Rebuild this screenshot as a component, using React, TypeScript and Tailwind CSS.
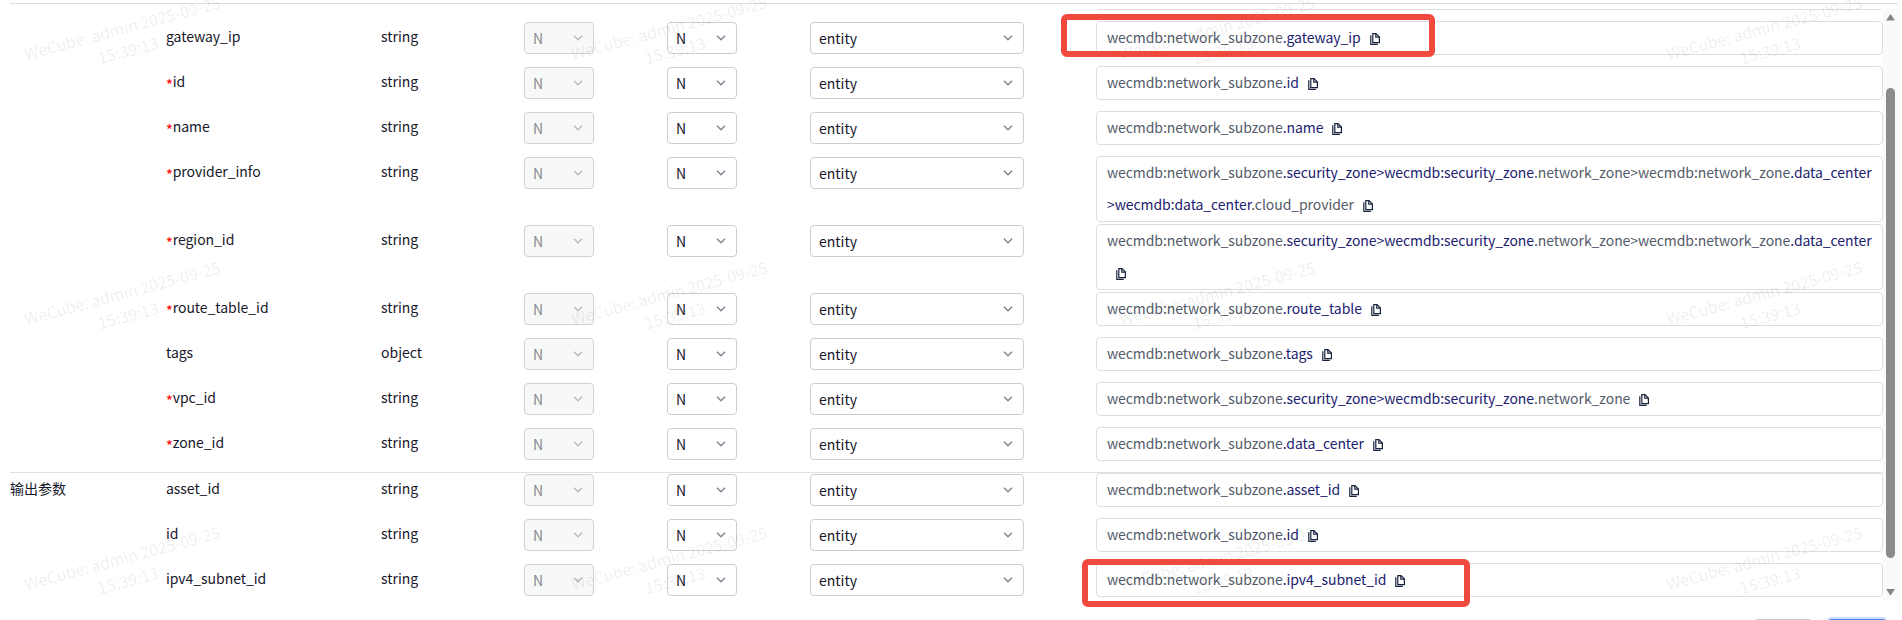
import React from "react";

type Part = { text: string; dark?: boolean };
type Row = { name: string; required?: boolean; type?: string; expr: Part[] };

const base: Part = { text: "wecmdb:network_subzone" };
const chain: Part[] = [
  base,
  { text: ".security_zone", dark: true },
  { text: ">wecmdb:security_zone", dark: true },
  { text: ".network_zone" },
];
const toCenter: Part[] = [...chain, { text: ">wecmdb:network_zone" }, { text: ".data_center", dark: true }];
const attr = (name: string): Part[] => [base, { text: "." + name, dark: true }];

const inputs: Row[] = [
  { name: "gateway_ip", expr: attr("gateway_ip") },
  { name: "id", required: true, expr: attr("id") },
  { name: "name", required: true, expr: attr("name") },
  {
    name: "provider_info",
    required: true,
    expr: [...toCenter, { text: ">wecmdb:data_center", dark: true }, { text: ".cloud_provider" }],
  },
  { name: "region_id", required: true, expr: toCenter },
  { name: "route_table_id", required: true, expr: attr("route_table") },
  { name: "tags", type: "object", expr: attr("tags") },
  { name: "vpc_id", required: true, expr: chain },
  { name: "zone_id", required: true, expr: attr("data_center") },
];

const outputs: Row[] = [
  { name: "asset_id", expr: attr("asset_id") },
  { name: "id", expr: attr("id") },
  { name: "ipv4_subnet_id", expr: attr("ipv4_subnet_id") },
];

function Chevron() {
  return (
    <svg width="10" height="6" viewBox="0 0 10 6" fill="none" stroke="currentColor" strokeWidth="1.5">
      <path d="M1 0.8 5 4.8 9 0.8" />
    </svg>
  );
}

function CopyIcon() {
  return (
    <svg
      className="ml-[9px] inline-block align-[-2px]"
      width="10"
      height="12"
      viewBox="0 0 10 12"
      fill="none"
      stroke="#17233d"
      strokeWidth="1.2"
    >
      <path d="M2.8 0.6H6L9.4 4v5.6H2.8Z" />
      <path d="M5.8 0.6v3.6h3.6" />
      <path d="M0.8 2.2v9.2h7" />
    </svg>
  );
}

function Select({ value, disabled }: { value: string; disabled?: boolean }) {
  return (
    <div
      className={
        disabled
          ? "mt-px flex h-8 w-full items-center justify-between rounded border border-[#cfd1d3] bg-[#f7f9f8] pr-[10px] pl-[8px] text-[#8a8b8c]"
          : "mt-px flex h-8 w-full items-center justify-between rounded border border-[#cccdd1] bg-white pr-[10px] pl-[8px] text-[#17182b]"
      }
    >
      <span>{value}</span>
      <span className={disabled ? "-mt-px text-[#b9bbc0]" : "-mt-px text-[#808695]"}>
        <Chevron />
      </span>
    </div>
  );
}

function Line({ row }: { row: Row }) {
  return (
    <div className="flex min-h-[45px] items-start py-px">
      <div className="w-[215px] leading-[30px] tracking-[-0.05px]">
        {row.required && <span className="inline-block translate-y-[3px] leading-none font-medium text-[#ff1010]">*</span>}
        {row.name}
      </div>
      <div className="w-[143px] leading-[30px]">{row.type ?? "string"}</div>
      <div className="mr-[73px] w-[70px]">
        <Select value="N" disabled />
      </div>
      <div className="mr-[73px] w-[70px]">
        <Select value="N" />
      </div>
      <div className="mr-[72px] w-[214px]">
        <Select value="entity" />
      </div>
      <div className="w-[787px] rounded border border-[#dcdee2] px-[10px]">
        <div className="-mt-px pb-px leading-[32px] tracking-[-0.07px] break-all text-[#535b69]">
          {row.expr.map((part, i) => (
            <span key={i} className={part.dark ? "text-[#1b2170]" : ""}>
              {part.text}
            </span>
          ))}
          <CopyIcon />
        </div>
      </div>
    </div>
  );
}

const marks = [0, 265, 530].flatMap((y) => [0, 547, 1095, 1642].map((x) => ({ x, y })));

export default function App() {
  return (
    <div className="relative h-[620px] w-[1902px] overflow-hidden bg-white font-['Noto_Sans_CJK_SC',sans-serif] text-[14px] text-[#17182b]">
      <div className="flex h-full flex-col">
        <div className="mt-[3px] ml-[10px] h-px w-[1888px] shrink-0 bg-[#dcdcdc]" />
        <div className="flex h-[596px] shrink-0 pl-[10px]">
          <div className="w-[1873px]">
            <div className="mt-[5px] ml-[1088px] h-px w-[783px] bg-[#dcdee2]" />
            <div className="mt-[10px] border-b border-[#e0e0e0] pb-px pl-[156px]">
              {inputs.map((row) => (
                <Line key={row.name} row={row} />
              ))}
            </div>
            <div className="-mt-px flex">
              <div className="w-[156px] py-px leading-[30px]">输出参数</div>
              <div>
                {outputs.map((row) => (
                  <Line key={row.name} row={row} />
                ))}
              </div>
            </div>
          </div>
          <div className="mt-[5px] flex w-[15px] flex-col items-center bg-[#fafafa]">
            <svg className="mt-[5px]" width="9" height="7" viewBox="0 0 9 7">
              <path d="M4.5 0 9 6.5H0Z" fill="#858585" />
            </svg>
            <div className="mt-[67px] h-[470px] w-[9px] rounded-full bg-[#8b8b8b]" />
            <svg className="mt-[31px]" width="9" height="7" viewBox="0 0 9 7">
              <path d="M0 0H9L4.5 6.5Z" fill="#858585" />
            </svg>
          </div>
        </div>
        <div className="mt-[19px] flex shrink-0 pl-[1755px]">
          <div className="h-8 w-[56px] rounded-xs bg-[#cccccc]" />
          <div className="ml-[18px] h-8 w-[56px] rounded-xs bg-[#5384ee] ring-2 ring-[#cfdefb]" />
        </div>
      </div>

      <div className="pointer-events-none absolute inset-0">
        {marks.map((m) => (
          <div
            key={m.x + "-" + m.y}
            className="absolute w-[220px] -rotate-15 text-center text-[16px] leading-[23px] tracking-[-0.05px] whitespace-nowrap text-black/8"
            style={{ left: m.x + 15, top: m.y + 16 }}
          >
            WeCube: admin 2025-09-25
            <br />
            15:39:13
          </div>
        ))}
      </div>

      <div className="absolute top-[14px] left-[1061px] h-[43px] w-[374px] rounded-[6px] border-[6px] border-[#f04a3e]" />
      <div className="absolute top-[559px] left-[1082px] h-[48px] w-[388px] rounded-[6px] border-[6px] border-[#f04a3e]" />
    </div>
  );
}
